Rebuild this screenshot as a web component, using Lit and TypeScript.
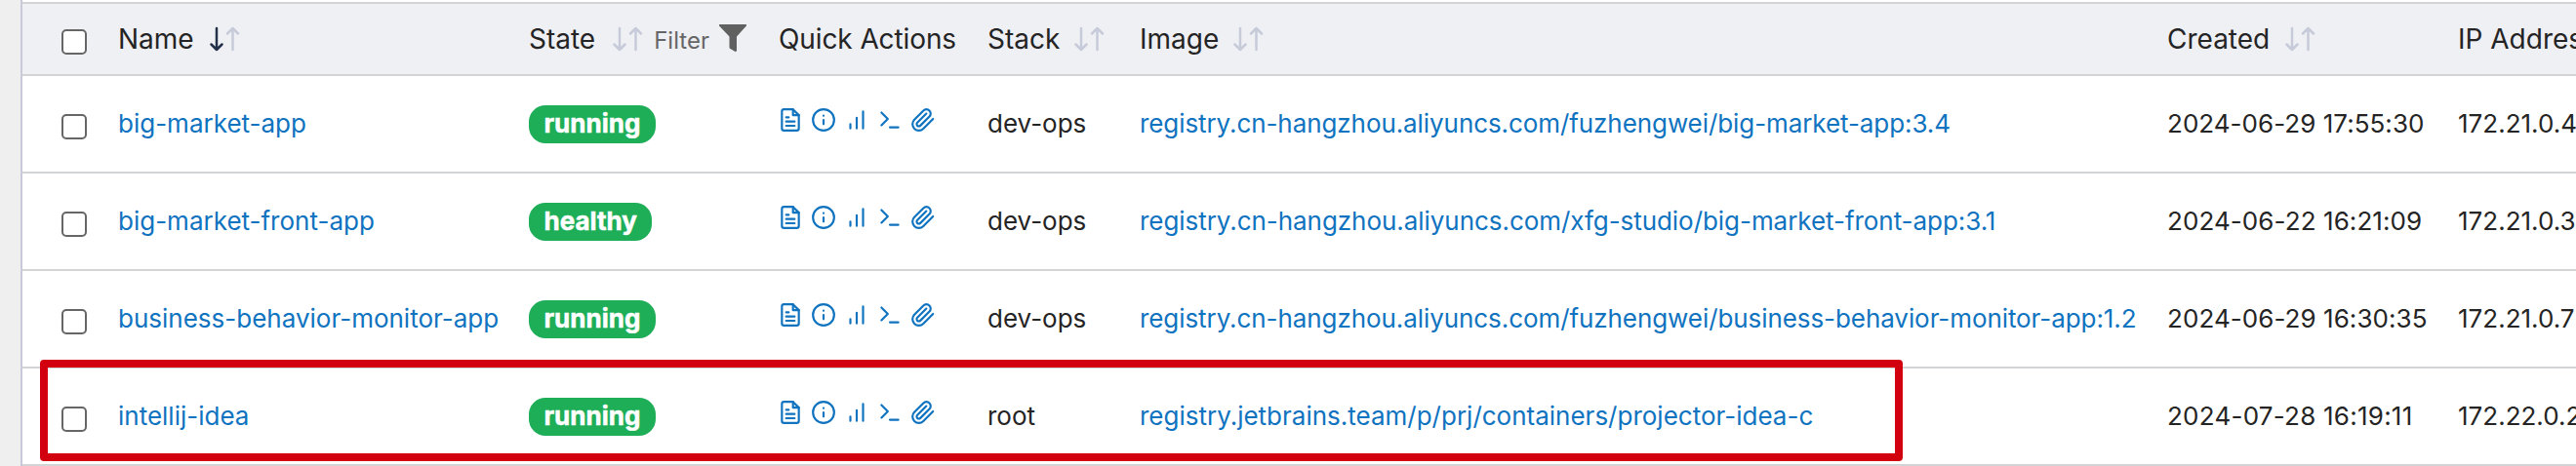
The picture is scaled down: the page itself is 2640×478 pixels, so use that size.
import { LitElement, html, css, svg } from "lit";
import { customElement } from "lit/decorators.js";
import { styleMap } from "lit/directives/style-map.js";

type Row = {
  name: string; state: string; stack: string; image: string; created: string; ip: string;
  imageTracking: number; dateTracking: number;
};

const rows: Row[] = [
  { name: "big-market-app", state: "running", stack: "dev-ops", image: "registry.cn-hangzhou.aliyuncs.com/fuzhengwei/big-market-app:3.4", created: "2024-06-29 17:55:30", ip: "172.21.0.4", imageTracking: -0.08, dateTracking: 0.03 },
  { name: "big-market-front-app", state: "healthy", stack: "dev-ops", image: "registry.cn-hangzhou.aliyuncs.com/xfg-studio/big-market-front-app:3.1", created: "2024-06-22 16:21:09", ip: "172.21.0.3", imageTracking: -0.05, dateTracking: 0.08 },
  { name: "business-behavior-monitor-app", state: "running", stack: "dev-ops", image: "registry.cn-hangzhou.aliyuncs.com/fuzhengwei/business-behavior-monitor-app:1.2", created: "2024-06-29 16:30:35", ip: "172.21.0.7", imageTracking: -0.075, dateTracking: 0.06 },
  { name: "intellij-idea", state: "running", stack: "root", image: "registry.jetbrains.team/p/prj/containers/projector-idea-c", created: "2024-07-28 16:19:11", ip: "172.22.0.2", imageTracking: 0, dateTracking: 0.24 },
];

const actionIcons = [
  svg`<path d="M14.5 2H6a2 2 0 0 0-2 2v16a2 2 0 0 0 2 2h12a2 2 0 0 0 2-2V7.5L14.500 2z"/><polyline points="14.500 2 14.500 7.500 20 7.500"/><path d="M16 13.500H8M16 17.500H8M10.500 9.500H8"/>`,
  svg`<circle cx="12" cy="12" r="10"/><path d="M12 16v-4M12 8h.01"/>`,
  svg`<path d="M12 20V10M18 20V4M6 20v-4"/>`,
  svg`<path d="m4 17 6-6-6-6M12 19h8"/>`,
  svg`<path d="m21.44 11.05-9.19 9.19a6 6 0 0 1-8.49-8.49l8.57-8.57A4 4 0 1 1 18 8.84l-8.59 8.57a2 2 0 0 1-2.83-2.83l8.49-8.48"/>`,
];

@customElement("app-root")
export class AppRoot extends LitElement {
  static styles = css`
    :host { display: block; width: 2640px; height: 478px; overflow: hidden; position: relative; background: #efefef; font-family: Inter, sans-serif; color: #242424; font-size: 26px; }
    .panel { box-sizing: border-box; margin-left: 21px; height: 478px; padding-top: 2px; border-left: 2px solid #c6cad9; background: #fff; }
    .row { display: grid; grid-template-columns: 98px 421px 255px 214px 157px 1053px 298px 200px; box-sizing: border-box; height: 100px; align-items: center; border-bottom: 2px solid #d3d4d5; white-space: nowrap; }
    .head { height: 76px; border-top: 2px solid #d3d4d5; background: #eff0f4; font-size: 28px; }
    .title { display: flex; align-items: center; }
    .text { padding-bottom: 2px; }
    .check { display: block; box-sizing: border-box; width: 26px; height: 26px; margin: 6px 0 0 40px; border: 2px solid #666; border-radius: 5px; background: #fff; }
    .link { color: #0f73bf; }
    .sort { display: block; width: 32px; height: 26px; margin-left: 15px; fill: none; stroke: #c6cad9; stroke-width: 2.5; stroke-linecap: round; stroke-linejoin: round; }
    .dark { stroke: #23304a; }
    .filter { display: flex; align-items: center; margin-left: 11px; padding-top: 2px; font-size: 24px; color: #666; }
    .funnel { display: block; width: 28px; height: 28px; margin: -4px 0 0 10px; fill: #606060; }
    .badge { display: inline-flex; align-items: center; justify-content: center; box-sizing: border-box; height: 39px; padding: 0 15.500px 2px; border-radius: 17px; background: #1eae58; color: #fff; font-weight: 700; -webkit-text-stroke: 0.5px #fff; }
    .actions { display: flex; gap: 8px; margin-bottom: 8px; }
    .icon { display: block; width: 26px; height: 26px; fill: none; stroke: #0f73bf; stroke-width: 2; stroke-linecap: round; stroke-linejoin: round; }
    .quick { padding-left: 1px; letter-spacing: -0.1px; }
    .stack { padding-left: 1px; }
    .stack .sort { margin-left: 14px; }
    .state .sort { margin-left: 17px; }
    .image .sort { margin-left: 14px; }
    .marker { position: absolute; left: 41px; top: 369px; box-sizing: border-box; width: 1909px; height: 104px; border: 8px solid #d2000f; border-radius: 4px; }
  `;

  sort(active = false) {
    return html`<svg class="sort" viewBox="0 0 32 26"><path class=${active ? "dark" : ""} d="M8 2v22M2.500 18.500 8 24l5.500-5.500"/><path d="M24.500 24V2M19 7.500 24.500 2l5.500 5.500"/></svg>`;
  }

  render() {
    return html`
      <div class="panel">
        <div class="row head">
          <span class="check"></span>
          <div class="title">Name${this.sort(true)}</div>
          <div class="title state">State${this.sort()}<span class="filter">Filter<svg class="funnel" viewBox="0 0 28 28"><path d="M1 0H27Q29 0 27.500 2L18 12.500V26.500Q18 28 16.500 28L11.500 25Q10.500 24.500 10.500 23.500V12.500L.5 2Q-1 0 1 0Z"/></svg></span></div>
          <div class="title quick">Quick Actions</div>
          <div class="title stack">Stack${this.sort()}</div>
          <div class="title image">Image${this.sort()}</div>
          <div class="title">Created${this.sort()}</div>
          <div class="title">IP Address</div>
        </div>
        ${rows.map((r) => html`
          <div class="row">
            <span class="check"></span>
            <span class="text link">${r.name}</span>
            <div><span class="badge">${r.state}</span></div>
            <div class="actions">${actionIcons.map((i) => html`<svg class="icon" viewBox="0 0 24 24">${i}</svg>`)}</div>
            <span class="text stack">${r.stack}</span>
            <span class="text link" style=${styleMap({ letterSpacing: `${r.imageTracking}px` })}>${r.image}</span>
            <span class="text" style=${styleMap({ letterSpacing: `${r.dateTracking}px` })}>${r.created}</span>
            <span class="text">${r.ip}</span>
          </div>`)}
      </div>
      <div class="marker"></div>`;
  }
}
